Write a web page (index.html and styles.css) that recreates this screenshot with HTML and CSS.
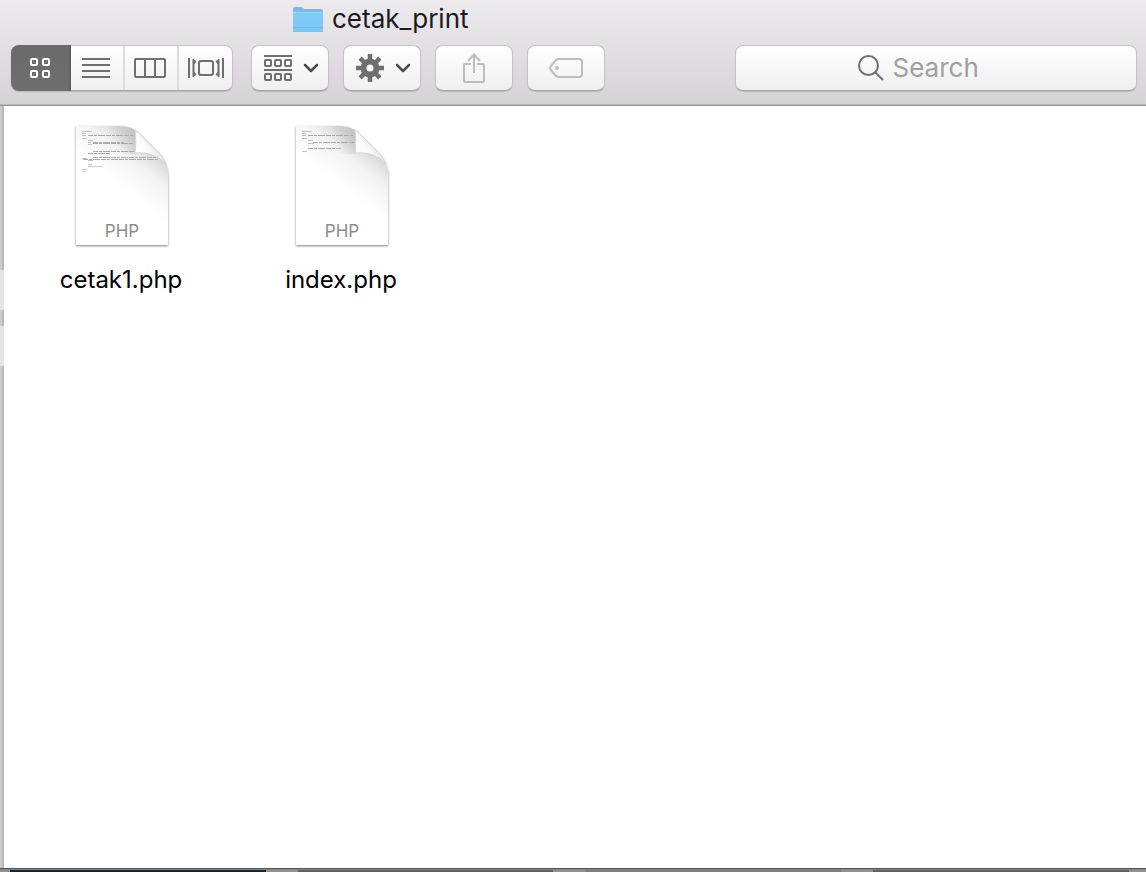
FILE: index.html
```html
<!DOCTYPE html>
<html lang="en">
<head>
<meta charset="utf-8">
<title>cetak_print</title>
<link rel="stylesheet" href="styles.css">
</head>
<body>
<div class="window">
  <header class="header">
    <h1 class="title">
      <svg class="folder" width="32" height="28" viewBox="0 0 32 28" aria-hidden="true">
        <defs><linearGradient id="folder-fill" x1="0" y1="0" x2="0" y2="1"><stop offset="0" stop-color="#80cdf6"/><stop offset="1" stop-color="#7ac6f2"/></linearGradient></defs>
        <path d="M1 26.500h30" stroke="#a9b7c2" stroke-width="1"/>
        <path d="M1 4Q1 2 3 2h6q1 0 2 1t2 1h16q2 0 2 2v19q0 1-1 1H2q-1 0-1-1z" fill="#74bde8"/>
        <path d="M1 7h30v18q0 1-1 1H2q-1 0-1-1z" fill="url(#folder-fill)"/>
        <path d="M1 7.500h30" stroke="#96d8fa"/>
        <path d="M1 22.500h30" stroke="#6dbbe8"/>
      </svg>
      <span>cetak_print</span>
    </h1>
    <div class="toolbar">
      <div class="views" role="group" aria-label="View">
        <button class="view view-active" aria-label="Icons" aria-pressed="true">
          <svg width="20" height="20" viewBox="0 0 20 20" fill="none" stroke="#fff" stroke-width="2"><rect x="1" y="1" width="6" height="6" rx="1"/><rect x="13" y="1" width="6" height="6" rx="1"/><rect x="1" y="13" width="6" height="6" rx="1"/><rect x="13" y="13" width="6" height="6" rx="1"/></svg>
        </button>
        <button class="view" aria-label="List">
          <svg width="28" height="20" viewBox="0 0 28 20" stroke="#6f6f6f" stroke-width="2"><path d="M0 1h28M0 7h28M0 13h28M0 19h28"/></svg>
        </button>
        <button class="view" aria-label="Columns">
          <svg width="32" height="20" viewBox="0 0 32 20" fill="none" stroke="#6f6f6f" stroke-width="2"><rect x="1" y="1" width="30" height="18" rx="1"/><path d="M11 1v18M21 1v18"/></svg>
        </button>
        <button class="view" aria-label="Cover Flow">
          <svg width="36" height="20" viewBox="0 0 36 20" fill="none" stroke="#6f6f6f" stroke-width="2"><path d="M1 0v20M35 0v20"/><path d="M5 1l3 2.500L6 6v8l2 2.500L5 19zM31 1l-3 2.500L30 6v8l-2 2.500 3 2.500z" fill="#6f6f6f" stroke-width="1"/><rect x="11" y="3" width="14" height="14" rx="2"/></svg>
        </button>
      </div>
      <div class="actions">
        <button class="button button-menu" aria-label="Arrange">
          <svg width="28" height="26" viewBox="0 0 28 26" fill="none" stroke="#6f6f6f" stroke-width="2"><path d="M0 1h28M0 15h28"/><rect x="1" y="5" width="6" height="6" rx="1"/><rect x="11" y="5" width="6" height="6" rx="1"/><rect x="21" y="5" width="6" height="6" rx="1"/><rect x="1" y="19" width="6" height="6" rx="1"/><rect x="11" y="19" width="6" height="6" rx="1"/><rect x="21" y="19" width="6" height="6" rx="1"/></svg>
          <svg width="16" height="10" viewBox="0 0 16 10" fill="none" stroke="#4d4d4d" stroke-width="2.500" stroke-linecap="round" stroke-linejoin="round"><path d="M2 2l6 6 6-6"/></svg>
        </button>
        <button class="button button-menu" aria-label="Action">
          <svg width="28" height="28" viewBox="0 0 28 28" fill="none" stroke="#6f6f6f"><circle cx="14" cy="14" r="6.500" stroke-width="6"/><path d="M14 0v6M14 22v6M0 14h6M22 14h6M4.100 4.100l4.200 4.200M19.700 19.700l4.200 4.200M4.100 23.900l4.200-4.200M19.700 8.300l4.200-4.200" stroke-width="4.500"/></svg>
          <svg width="16" height="10" viewBox="0 0 16 10" fill="none" stroke="#4d4d4d" stroke-width="2.500" stroke-linecap="round" stroke-linejoin="round"><path d="M2 2l6 6 6-6"/></svg>
        </button>
        <button class="button" aria-label="Share" disabled>
          <svg width="22" height="30" viewBox="0 0 22 30" fill="none" stroke="#bdbdbd" stroke-width="2"><path d="M8 11H2q-1 0-1 1v16q0 1 1 1h18q1 0 1-1V12q0-1-1-1h-6M11 20V2M5 8l6-6.500L17 8"/></svg>
        </button>
        <button class="button" aria-label="Tags" disabled>
          <svg width="34" height="20" viewBox="0 0 34 20" fill="none" stroke="#bdbdbd" stroke-width="2"><path d="M10 1h20q3 0 3 3v12q0 3-3 3H10q-2 0-3-1l-5-6q-2-2 0-4l5-6q1-1 3-1z"/><circle cx="8" cy="10" r="2" fill="#bdbdbd" stroke="none"/></svg>
        </button>
      </div>
      <label class="search">
        <svg width="26" height="26" viewBox="0 0 26 26" fill="none" stroke="#707070" stroke-width="2"><circle cx="10.500" cy="10.500" r="9.500"/><path d="M17 17l8 8"/></svg>
        <input class="search-input" type="search" placeholder="Search" aria-label="Search">
      </label>
    </div>
  </header>
  <main class="content">
    <div class="edge" aria-hidden="true"><span class="edge-light"></span><span class="edge-gap"></span><span class="edge-light"></span></div>
    <div class="files">
      <figure class="file">
        <svg class="document" width="100" height="126" viewBox="0 0 100 126" aria-hidden="true">
          <defs>
            <linearGradient id="page-fill" gradientUnits="userSpaceOnUse" x1="80" y1="30" x2="52" y2="66"><stop offset="0" stop-color="#dadada"/><stop offset="0.400" stop-color="#f3f3f3"/><stop offset="1" stop-color="#fff"/></linearGradient>
            <linearGradient id="fold-fill" gradientUnits="userSpaceOnUse" x1="64" y1="30" x2="80" y2="18"><stop offset="0" stop-color="#fff"/><stop offset="0.600" stop-color="#fafafa"/><stop offset="1" stop-color="#e4e4e4"/></linearGradient>
            <linearGradient id="fold-shade" gradientUnits="userSpaceOnUse" x1="44" y1="24" x2="66" y2="14"><stop offset="0" stop-color="#999" stop-opacity="0"/><stop offset="1" stop-color="#999" stop-opacity="0.350"/></linearGradient>
            <filter id="page-shadow" x="-10%" y="-10%" width="120%" height="120%"><feDropShadow dx="0" dy="1" stdDeviation="1" flood-color="#000" flood-opacity="0.500"/></filter>
            <g id="page">
              <path d="M5 4h41c11 0 18 3 25 10l13 13c9 9 13 16 13 27v69H5z" fill="url(#page-fill)" filter="url(#page-shadow)"/>
              <path d="M40 4h6c9 0 14 1 18 4v24H40z" fill="url(#fold-shade)"/>
            </g>
            <path id="fold" d="M64 8c1 8 1 15 0 23 14-1 25 3 31 12-2-6-5-11-11-16L71 14C68 11 67 10 64 8z" fill="url(#fold-fill)" stroke="#d4d4d4" stroke-width="1"/>
          </defs>
          <use href="#page"/>
          <g fill="none" stroke="#aaa" stroke-width="1"><path d="M11 9.500h10M11 11.500h4M11 13.500h4M11 16.500h5M17 18.500h5M17 20.500h3M17 22.500h4M11 36.500h5M17 38.500h5M17 42.500h4M17 44.500h7M11 47.500h5M11 49.500h4" stroke="#c4c4c4"/><path d="M17 13.500h46M22 20.500h31M22 21.500h40M22 29.500h42M17 31.500h22M22 35.500h66M12 37.500h75" stroke-dasharray="5 1 3 1 7 1"/><path d="M22 44.500h10" stroke="#ccc"/></g>
          <use href="#fold"/>
          <text class="kind" x="51" y="115" text-anchor="middle">PHP</text>
        </svg>
        <figcaption class="name">cetak1.php</figcaption>
      </figure>
      <figure class="file">
        <svg class="document" width="100" height="126" viewBox="0 0 100 126" aria-hidden="true">
          <use href="#page"/>
          <g fill="none" stroke="#aaa" stroke-width="1"><path d="M11 9.500h10M11 11.500h4M11 13.500h4M11 16.500h5M17 18.500h5M17 21.500h6M11 29.500h5" stroke="#c4c4c4"/><path d="M17 13.500h46M22 20.500h42M17 26.500h33" stroke-dasharray="5 1 3 1 7 1"/></g>
          <use href="#fold"/>
          <text class="kind" x="51" y="115" text-anchor="middle">PHP</text>
        </svg>
        <figcaption class="name">index.php</figcaption>
      </figure>
    </div>
  </main>
  <div class="desktop" aria-hidden="true"><span class="dark"></span><span></span><span class="mid"></span><span></span><span class="soft"></span><span></span><span class="mid"></span></div>
</div>
</body>
</html>
```
FILE: styles.css
```css
* { box-sizing: border-box; }
body {
  margin: 0;
  font-family: Inter, "Liberation Sans", sans-serif;
  background: #fff;
}
svg { display: block; flex: none; }
.window {
  display: flex;
  flex-direction: column;
  min-height: 100vh;
}
.header {
  background: linear-gradient(#eceaed, #d5d3d6);
  border-bottom: 1px solid #929193;
  box-shadow: inset 0 -1px #bcbabd;
  padding-bottom: 14px;
}
.title {
  display: flex;
  align-items: center;
  gap: 8px;
  margin: 0;
  padding: 0 0 7px 292px;
  font-size: 26px;
  line-height: 38px;
  font-weight: 400;
  color: #1c191c;
}
.toolbar {
  display: flex;
  padding: 0 9px 0 11px;
}
.views, .button, .search {
  height: 46px;
  border: 1px solid #c6c4c7;
  border-bottom-color: #a7a5a8;
  border-radius: 8px;
  background: linear-gradient(#fefefe, #f0f0f0);
  box-shadow: 0 1px 1px #bab8bb;
}
.views {
  display: grid;
  grid-template-columns: 59px 54px 54px 53px;
  margin-right: 18px;
}
.view {
  display: flex;
  align-items: center;
  justify-content: center;
  padding: 0 2px 0 0;
  border: 0;
  border-right: 2px solid #dcdcdc;
  background: none;
}
.view:last-child { padding: 0; border-right: 0; }
.view-active {
  padding: 0;
  background: linear-gradient(#6a6a6a, #6f6f6f);
  border-right-color: #606060;
  border-radius: 8px 0 0 8px;
  margin: -1px 0 -1px -1px;
}
.actions { display: flex; gap: 14px; }
.button {
  display: flex;
  align-items: center;
  justify-content: center;
  width: 78px;
  padding: 0;
}
.button-menu { justify-content: flex-start; gap: 11px; padding-left: 12px; }
.search {
  display: flex;
  align-items: center;
  justify-content: center;
  gap: 9px;
  flex: 1;
  min-width: 180px;
  margin-left: 130px;
}
.search-input {
  width: 122px;
  padding: 0;
  border: 0;
  outline: 0;
  background: none;
  font: 26px/34px Inter, "Liberation Sans", sans-serif;
  color: #333;
}
.search-input::placeholder { color: #a0a0a0; opacity: 1; }
.content {
  display: flex;
  flex: 1;
}
.edge {
  display: flex;
  flex-direction: column;
  width: 4px;
  padding-top: 164px;
  background: #cbcbcb;
  border-right: 2px solid #b9b9b9;
}
.edge-light { height: 40px; background: #e4e4e6; margin-right: -2px; }
.edge-gap { height: 16px; }
.files {
  display: flex;
  flex-wrap: wrap;
  align-content: flex-start;
  flex: 1;
  padding: 16px 7px;
}
.file {
  display: flex;
  flex-direction: column;
  align-items: center;
  gap: 16px;
  width: 220px;
  margin: 0;
}
.kind { font-size: 17px; fill: #8c8c8c; }
.name {
  font-size: 24px;
  line-height: 32px;
  color: #000;
}
.desktop {
  display: grid;
  grid-template-columns: 256fr 32fr 255fr 32fr 256fr 32fr 256fr;
  height: 4px;
  padding: 0 17px 0 10px;
  border-top: 1px solid #565656;
  box-shadow: inset 0 1px #858384;
  background: #929091;
}
.desktop span { margin-top: 1px; }
.dark { background: #15242e; }
.mid { background: #625e61; }
.soft { background: #817f80; }
```
